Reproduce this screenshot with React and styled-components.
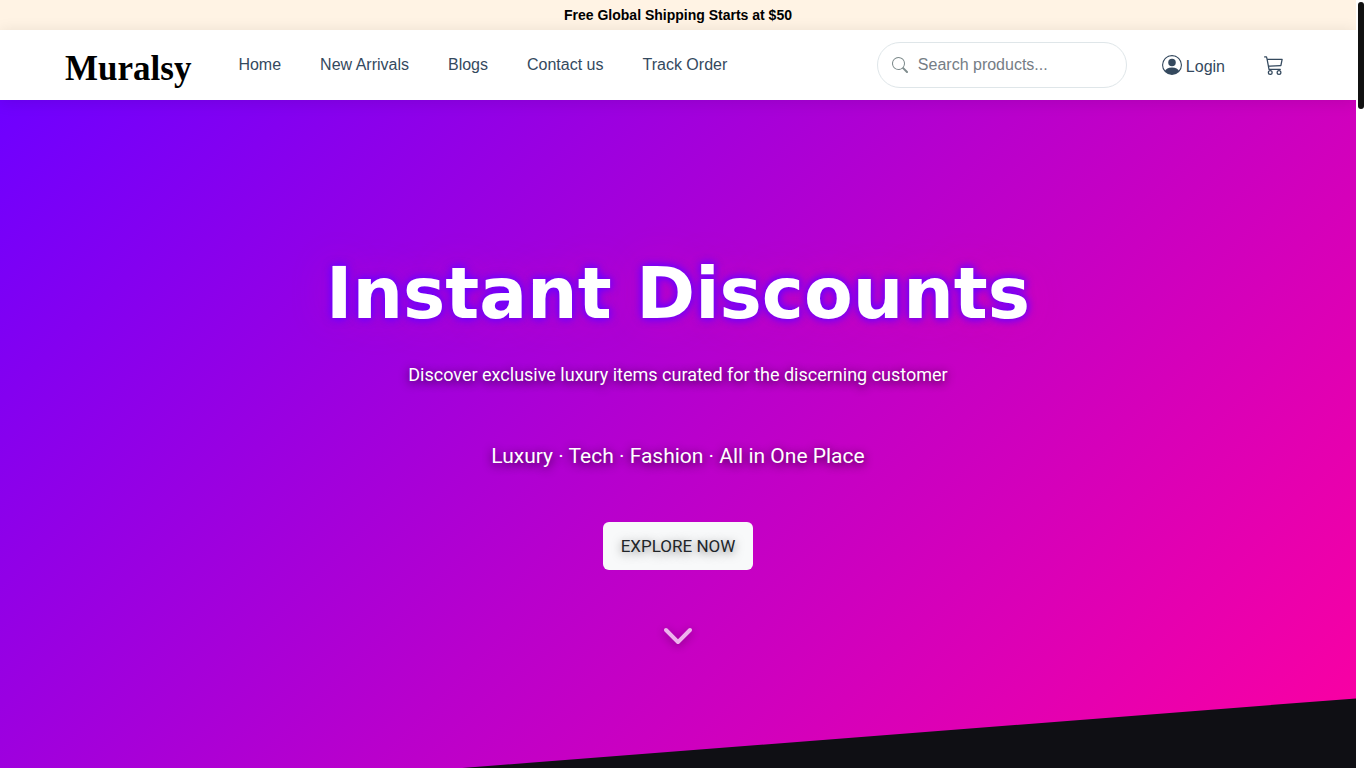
import React from "react";
import styled, { createGlobalStyle } from "styled-components";
import { BsSearch, BsPersonCircle, BsCart3 } from "react-icons/bs";
import { FaChevronDown } from "react-icons/fa6";

const GlobalStyle = createGlobalStyle`
  *, *::before, *::after { box-sizing: border-box; }
  body {
    margin: 0;
    font-family: "Liberation Sans", Arial, sans-serif;
    font-size: 16px;
    line-height: 24px;
    color: #34495e;
  }
`;

const Viewport = styled.div`
  display: flex;
  height: 100vh;
  overflow: hidden;
  background: #fff;
`;

const Page = styled.div`
  flex: 1;
  min-width: 0;
  overflow: hidden;
  background: #0f0f14;
`;

const ScrollRail = styled.div`
  flex: none;
  width: 10px;
  padding: 2px;
  background: #fff;
`;

const ScrollThumb = styled.div`
  width: 6px;
  height: 14%;
  border-radius: 3px;
  background: #111;
`;

const Announcement = styled.p`
  margin: 0;
  height: 30px;
  background: #fff3e4;
  color: #000;
  font-size: 14px;
  font-weight: 700;
  line-height: 30px;
  text-align: center;
`;

const Header = styled.header`
  position: relative;
  z-index: 1;
  display: flex;
  align-items: center;
  height: 70px;
  padding: 0 72px 0 65px;
  background: #fff;
  box-shadow: 0 2px 15px rgba(0, 0, 0, 0.1);
`;

const Logo = styled.a`
  margin-right: 47px;
  padding-top: 8px;
  color: #000;
  font-family: "Liberation Serif", "Times New Roman", serif;
  font-size: 35px;
  font-weight: 700;
  line-height: 40px;
  text-decoration: none;
`;

const Nav = styled.nav`
  display: flex;
  gap: 39px;
`;

const NavLink = styled.a`
  display: flex;
  align-items: center;
  gap: 4px;
  color: #34495e;
  text-decoration: none;
  white-space: nowrap;
`;

const Actions = styled.div`
  display: flex;
  align-items: center;
  margin-left: auto;
`;

const SearchBox = styled.label`
  display: flex;
  align-items: center;
  gap: 10px;
  width: 250px;
  height: 46px;
  margin-right: 35px;
  padding: 0 14px;
  border: 1px solid #dfe6e9;
  border-radius: 23px;
  color: #7f8c8d;

  svg { flex: none; }
`;

const SearchInput = styled.input`
  flex: 1;
  min-width: 0;
  padding: 0;
  border: 0;
  outline: 0;
  background: transparent;
  color: #34495e;
  font: inherit;

  &::placeholder { color: #757d85; opacity: 1; }
`;

const LoginLabel = styled.span`
  padding-top: 3px;
`;

const CartLink = styled(NavLink)`
  margin-left: 39px;
`;

const Hero = styled.section`
  display: flex;
  flex-direction: column;
  align-items: center;
  min-height: 704px;
  padding: 151px 24px 0;
  background: linear-gradient(135deg, #6e00ff 0%, #b900cc 50%, #ff009f 100%);
  clip-path: polygon(0 0, 100% 0, 100% 85%, 0 100%);
  color: #fff;
  font-family: Roboto, sans-serif;
  text-align: center;
  text-shadow: 0 2px 10px rgba(0, 0, 0, 0.8);
`;

const Title = styled.h1`
  margin: 0 0 24px;
  font-family: "DejaVu Sans", sans-serif;
  font-size: 71px;
  font-weight: 700;
  line-height: 86px;
  text-shadow: 0 0 10px #6a00ff, 0 0 10px #6a00ff, 0 0 40px rgba(255, 0, 160, 0.3);
`;

const Text = styled.p`
  margin: 0;
  font-size: ${(p) => (p.$large ? 21 : 18)}px;
  line-height: ${(p) => (p.$large ? 32 : 28)}px;
  margin-bottom: ${(p) => (p.$large ? 50 : 51)}px;
`;

const ExploreButton = styled.button`
  width: 150px;
  height: 48px;
  padding: 0;
  border: 0;
  border-radius: 6px;
  background: #f8f9fa;
  color: #212529;
  font: 400 17px/24px Roboto, sans-serif;
  text-shadow: 0 2px 10px rgba(0, 0, 0, 0.5);
`;

const ScrollCue = styled.a`
  display: flex;
  margin-top: 48px;
  color: #fff;
  opacity: 0.7;
  filter: drop-shadow(0 2px 5px rgba(0, 0, 0, 0.5));
`;

const links = ["Home", "New Arrivals", "Blogs", "Contact us", "Track Order"];

export default function App() {
  return (
    <>
      <GlobalStyle />
      <Viewport>
        <Page>
          <Announcement>Free Global Shipping Starts at $50</Announcement>
          <Header>
            <Logo href="#">Muralsy</Logo>
            <Nav>
              {links.map((label) => (
                <NavLink key={label} href="#">{label}</NavLink>
              ))}
            </Nav>
            <Actions>
              <SearchBox>
                <BsSearch size={16} aria-hidden="true" />
                <SearchInput type="search" aria-label="Search products" placeholder="Search products..." />
              </SearchBox>
              <NavLink href="#">
                <BsPersonCircle size={20} aria-hidden="true" />
                <LoginLabel>Login</LoginLabel>
              </NavLink>
              <CartLink href="#" aria-label="Cart">
                <BsCart3 size={20} />
              </CartLink>
            </Actions>
          </Header>
          <Hero>
            <Title>Instant Discounts</Title>
            <Text>Discover exclusive luxury items curated for the discerning customer</Text>
            <Text $large>Luxury · Tech · Fashion · All in One Place</Text>
            <ExploreButton type="button">EXPLORE NOW</ExploreButton>
            <ScrollCue href="#products" aria-label="Scroll down">
              <FaChevronDown size={32} />
            </ScrollCue>
          </Hero>
        </Page>
        <ScrollRail>
          <ScrollThumb />
        </ScrollRail>
      </Viewport>
    </>
  );
}
